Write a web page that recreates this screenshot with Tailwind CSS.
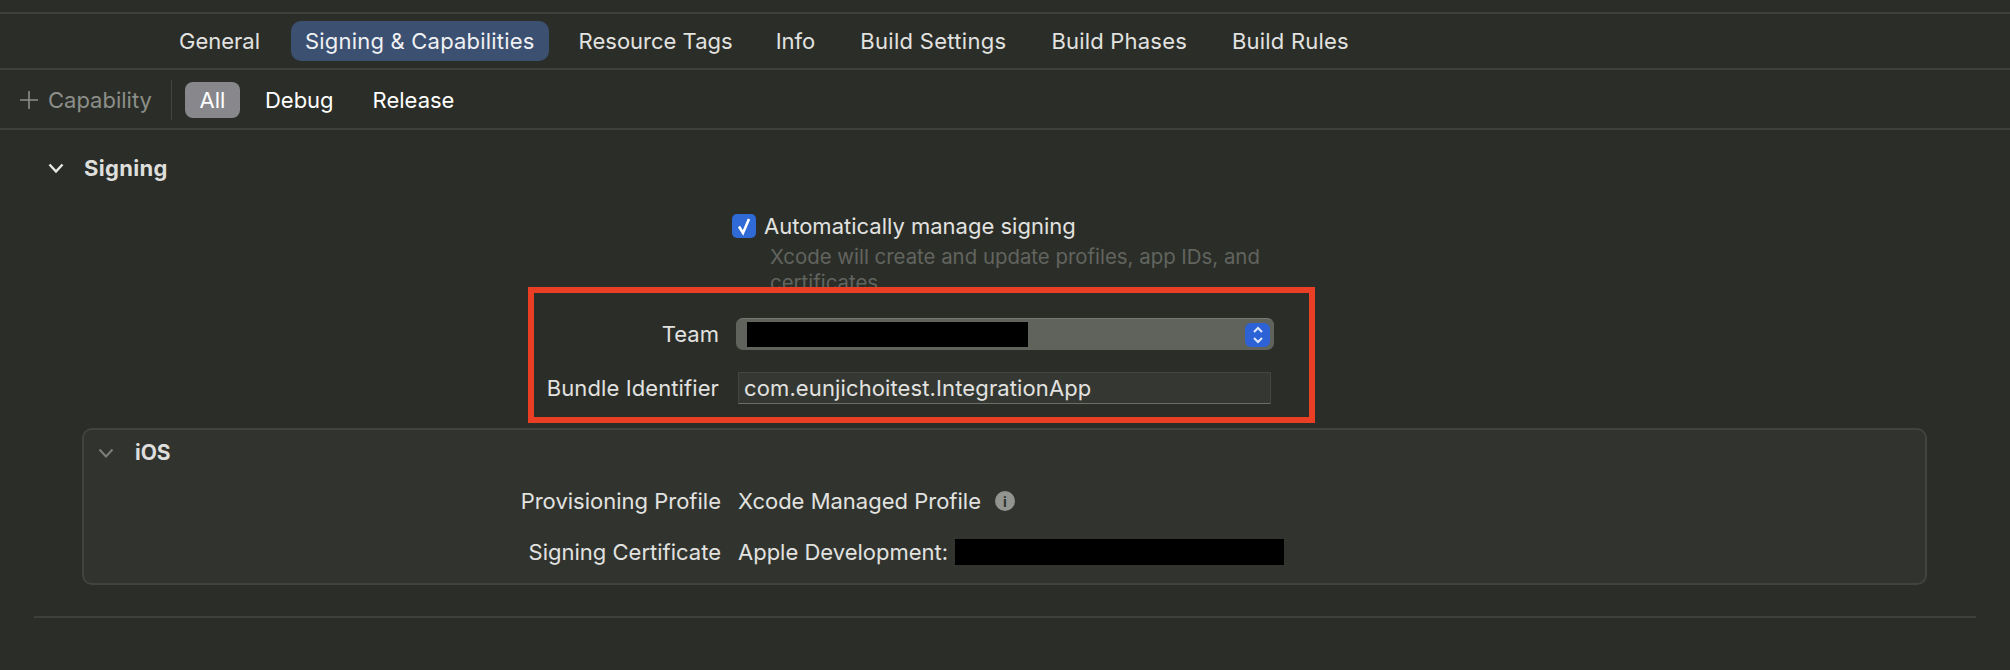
<!DOCTYPE html>
<html lang="en">
<head>
    <meta charset="UTF-8">
    <title>Signing &amp; Capabilities</title>
    <script src="https://cdn.jsdelivr.net/npm/@tailwindcss/browser@4"></script>
</head>
<body class="bg-[#2b2e28] text-[#e2e2e0] font-['Inter',sans-serif] text-[22px] w-[2010px] h-[670px] overflow-hidden">

    <!-- tab bar -->
    <div class="h-[12px]"></div>
    <nav class="h-[58px] border-y-2 border-[#3e413b] flex items-center pl-[165px]">
        <span class="px-[14px] h-[40px] flex items-center">General</span>
        <span class="ml-[17px] px-[14px] h-[40px] flex items-center rounded-[10px] bg-[#3c5072] text-[#f0f1f2] tracking-[0.2px]">Signing &amp; Capabilities</span>
        <span class="ml-[16px] px-[14px] h-[40px] flex items-center">Resource Tags</span>
        <span class="ml-[15px] px-[14px] h-[40px] flex items-center">Info</span>
        <span class="ml-[17px] px-[14px] h-[40px] flex items-center tracking-[0.3px]">Build Settings</span>
        <span class="ml-[17px] px-[14px] h-[40px] flex items-center tracking-[0.2px]">Build Phases</span>
        <span class="ml-[17px] px-[14px] h-[40px] flex items-center tracking-[0.2px]">Build Rules</span>
    </nav>

    <!-- filter bar -->
    <div class="h-[60px] border-b-2 border-[#3e413b] flex items-center pl-[20px] pt-[2px]">
        <svg class="w-[18px] h-[18px] text-[#8c8e89]" viewBox="0 0 18 18" fill="none" stroke="currentColor" stroke-width="1.6"><path d="M9 0v18M0 9h18"/></svg>
        <span class="ml-[10px] text-[#8c8e89]">Capability</span>
        <div class="ml-[19px] w-[1px] h-[40px] bg-[#43463f]"></div>
        <span class="ml-[13px] w-[55px] h-[36px] flex items-center justify-center rounded-[8px] bg-[#88888c] text-white">All</span>
        <span class="ml-[25px] text-white">Debug</span>
        <span class="ml-[39px] text-white">Release</span>
    </div>

    <!-- signing section -->
    <div class="h-[76px] flex items-center pl-[48px]">
        <svg class="w-[16px] h-[12px] text-[#e8e8e6]" viewBox="0 0 16 12" fill="none" stroke="currentColor" stroke-width="2.4"><path d="M1.5 2.5 8 9.5l6.5-7"/></svg>
        <span class="ml-[20px] font-bold text-[#dededc] tracking-[0.3px]">Signing</span>
    </div>

    <div class="mt-[8px] h-[24px] flex items-center pl-[732px]">
        <span class="w-[24px] h-[24px] rounded-[5px] bg-[#2f6ad6] flex items-center justify-center">
            <svg class="w-[18px] h-[20px]" viewBox="0 0 18 20" fill="none" stroke="white" stroke-width="2.6"><path d="M4 10.5 8 17 14 3"/></svg>
        </span>
        <span class="ml-[8px]">Automatically manage signing</span>
    </div>

    <div class="ml-[770px] w-[520px] h-[49px] overflow-hidden text-[20.4px] leading-[26px] text-[#62645f] pt-[6px]">Xcode will create and update profiles, app IDs, and certificates</div>

    <!-- highlighted fields -->
    <div class="ml-[528px] w-[787px] h-[136px] border-[6px] border-[#ea3f24] pt-[25px]">
        <div class="flex items-center h-[32px]">
            <span class="w-[185px] text-right">Team</span>
            <div class="ml-[17px] w-[538px] h-[32px] rounded-[7px] bg-[#60625c] border-t border-[#777973] flex items-center justify-between pl-[11px] pr-[4px]">
                <div class="w-[281px] h-[25px] bg-black"></div>
                <span class="w-[25px] h-[24px] rounded-[6px] bg-[#2c62d6] flex items-center justify-center">
                    <svg class="w-[12px] h-[20px]" viewBox="0 0 12 20" fill="none" stroke="#dfe8fb" stroke-width="2"><path d="M2 7 6 3l4 4M2 13l4 4 4-4"/></svg>
                </span>
            </div>
        </div>
        <div class="flex items-center h-[32px] mt-[22px]">
            <span class="w-[185px] text-right tracking-[0.1px]">Bundle Identifier</span>
            <div class="ml-[19px] w-[533px] h-[32px] bg-[#353832] border border-[#43463f] border-b-[#6b6d67] flex items-center pl-[5px] tracking-[0.12px]">com.eunjichoitest.IntegrationApp</div>
        </div>
    </div>

    <!-- iOS card -->
    <div class="ml-[82px] mt-[5px] w-[1845px] h-[157px] rounded-[10px] border-2 border-[#41443e] bg-[#31342e]">
        <div class="flex items-center h-[46px] pl-[14px]">
            <svg class="w-[16px] h-[10px] text-[#7c7e79]" viewBox="0 0 16 10" fill="none" stroke="currentColor" stroke-width="2"><path d="M1.5 1.5 8 8.5l6.5-7"/></svg>
            <span class="ml-[21px] text-[21px] font-bold text-[#dededc]">iOS</span>
        </div>
        <div class="flex items-center h-[28px] mt-[11px]">
            <span class="w-[637px] text-right">Provisioning Profile</span>
            <span class="ml-[17px]">Xcode Managed Profile</span>
            <span class="ml-[14px] w-[20px] h-[20px] rounded-full bg-[#92948f] text-[#31342e] text-[14px] font-bold flex items-center justify-center">i</span>
        </div>
        <div class="flex items-center h-[28px] mt-[23px]">
            <span class="w-[637px] text-right">Signing Certificate</span>
            <span class="ml-[17px]">Apple Development:</span>
            <div class="ml-[7px] w-[329px] h-[26px] bg-black"></div>
        </div>
    </div>

    <div class="ml-[34px] mt-[31px] w-[1942px] h-[2px] bg-[#3e413b]"></div>
</body>
</html>
